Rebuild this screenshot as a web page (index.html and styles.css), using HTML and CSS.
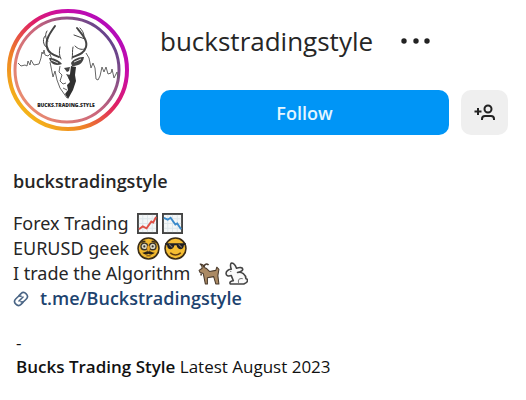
FILE: index.html
```html
<!DOCTYPE html>
<html lang="en">
<head>
  <meta charset="UTF-8">
  <meta name="viewport" content="width=device-width, initial-scale=1.0">
  <title>buckstradingstyle</title>
  <link rel="stylesheet" href="styles.css">
</head>
<body>
  <main class="profile">
    <header class="profile-header">
      <svg class="avatar" viewBox="0 0 124 124" role="img" aria-label="Bucks Trading Style logo">
        <defs>
          <linearGradient id="ring" x1="0.1" y1="0.9" x2="0.85" y2="0.15">
            <stop offset="0" stop-color="#f5bd16"/>
            <stop offset="0.3" stop-color="#ee8127"/>
            <stop offset="0.6" stop-color="#df2064"/>
            <stop offset="0.85" stop-color="#c80baa"/>
            <stop offset="1" stop-color="#b50bb8"/>
          </linearGradient>
          <linearGradient id="innerRing" x1="0.1" y1="0.8" x2="0.9" y2="0.2">
            <stop offset="0" stop-color="#e88a70"/>
            <stop offset="0.5" stop-color="#c9647c"/>
            <stop offset="1" stop-color="#67438c"/>
          </linearGradient>
        </defs>
        <circle cx="62" cy="62" r="59" fill="#fff" stroke="url(#ring)" stroke-width="4"/>
        <circle cx="61" cy="62" r="52" fill="#fff" stroke="url(#innerRing)" stroke-width="3"/>
        <!-- price line -->
        <g fill="none" stroke="#666" stroke-width="1" stroke-linejoin="round">
          <path d="M12 55l3 3 4-1 2 1 1-5 2 4 1-5 3 5 5-1 2-6 1-6 1 2 1-4 1 5 3 1 2-2 3 9"/>
          <path d="M80 45l3 5 2 10 2-5 2 5 1 11 2 1 2-4 2-9 2 5 2-5 2 7 3-1 1-4 2 9 3-6 1 7"/>
        </g>
        <!-- antlers -->
        <g fill="none" stroke="#444" stroke-linecap="round" stroke-linejoin="round">
          <path stroke-width="2" d="M53 49c-5-2-11-4-12-10-2-7 3-14 8-21M67 49c5-2 11-3 13-10 2-7-5-14-9-19"/>
          <path stroke-width="1" d="M42 33c-3-3-3-7-1-10M41 40c-5-4-4-10-2-12M55 51c-2-4-2-7-1-12M66 51c1-5 0-8 1-12M79 31l-11-4M79 41c-4 1-7 0-10-3M78 28c0-3-2-6-4-8"/>
        </g>
        <!-- ears and face -->
        <path fill="#444" d="M56 56c-4-5-9-6-13-6 2 7 7 8 13 6zM65 55c3-5 9-6 13-6-1 7-6 9-12 9z"/>
        <path fill="none" stroke="#ddd" stroke-width="1" d="M45 52l7 3M75 51l-7 3"/>
        <path fill="#303030" d="M65 58l5 1-1 8 1 6-3 9-5 9-3-5 3-4-1-5 3-3-2-5 2-3z"/>
        <path fill="#444" d="M58 60l6-1-1 4-2 1zM60 66l4 1-1 4z"/>
        <path fill="none" stroke="#666" stroke-width="1" d="M44 54l3 15 2-6 2 9 3 8 7 10M54 58l-1 6 3 3-2 6 3 3 3-1M57 80l4 2"/>
        <text class="avatar-text" x="60" y="99" text-anchor="middle">BUCKS.TRADING.STYLE</text>
      </svg>
      <div class="profile-info">
        <div class="title-row">
          <h1>buckstradingstyle</h1>
          <button type="button" class="btn-more" aria-label="More options">
            <svg width="30" height="6" viewBox="0 0 30 6" fill="#222">
              <circle cx="3" cy="3" r="2.7"/>
              <circle cx="15" cy="3" r="2.7"/>
              <circle cx="26" cy="3" r="2.7"/>
            </svg>
          </button>
        </div>
        <div class="action-row">
          <button type="button" class="btn btn-follow">Follow</button>
          <button type="button" class="btn btn-suggest" aria-label="Similar accounts">
            <svg width="24" height="20" viewBox="0 0 24 20" fill="none" stroke="#222" stroke-width="2">
              <circle cx="15" cy="6" r="3.5"/>
              <path d="M9 17v-1c0-2 1-3 3-3h6c2 0 3 1 3 3v1"/>
              <path d="M5 5v7M1.5 8.5h7"/>
            </svg>
          </button>
        </div>
      </div>
    </header>

    <section class="bio">
      <h2>buckstradingstyle</h2>
      <p>
        <span>Forex Trading</span>
        <svg class="emoji" viewBox="0 0 22 22" role="img" aria-label="Chart increasing">
          <rect x="1" y="1" width="20" height="20" fill="#f4f7f8" stroke="#444" stroke-width="2"/>
          <path d="M6 2v18M11 2v18M16 2v18M2 6h18M2 11h18M2 16h18" stroke="#dce6ea"/>
          <path d="M2 17l4-3 4 2 5-7 2 1 3-6" fill="none" stroke="#df5147" stroke-width="2"/>
        </svg>
        <svg class="emoji" viewBox="0 0 22 22" role="img" aria-label="Chart decreasing">
          <rect x="1" y="1" width="20" height="20" fill="#f4f7f8" stroke="#444" stroke-width="2"/>
          <path d="M6 2v18M11 2v18M16 2v18M2 6h18M2 11h18M2 16h18" stroke="#dce6ea"/>
          <path d="M2 5l4 2 3-2 5 7 2-1 4 6" fill="none" stroke="#3b8acb" stroke-width="2"/>
        </svg>
      </p>
      <p>
        <span>EURUSD geek</span>
        <svg class="emoji emoji-face" viewBox="0 0 22 22" role="img" aria-label="Disguised face">
          <circle cx="11" cy="11" r="10" fill="#f2b92f" stroke="#3a2d18" stroke-width="1.5"/>
          <path d="M4 5l4-1M14 4l4 1" stroke="#3a2d18" stroke-width="1.5"/>
          <circle cx="7" cy="9" r="3.2" fill="#d8d6c4" stroke="#3a3328" stroke-width="1.3"/>
          <circle cx="15" cy="9" r="3.2" fill="#d8d6c4" stroke="#3a3328" stroke-width="1.3"/>
          <circle cx="7" cy="9" r="1" fill="#3a3328"/>
          <circle cx="15" cy="9" r="1" fill="#3a3328"/>
          <ellipse cx="11" cy="11" rx="1.5" ry="3" fill="#efaa28" stroke="#8a5c1c" stroke-width="0.5"/>
          <path d="M5 15c3 0 4-2 6-1 2-1 3 1 6 1-2 2-5 2-6 1-1 1-4 1-6-1z" fill="#292116"/>
          <path d="M9 18h4" stroke="#6b4314"/>
        </svg>
        <svg class="emoji emoji-face" viewBox="0 0 22 22" role="img" aria-label="Face with sunglasses">
          <circle cx="11" cy="11" r="10" fill="#f5bd32" stroke="#3c2c15" stroke-width="1.5"/>
          <path d="M1 6h20v1l-2 1c0 5-6 5-7 0h-2c-1 5-7 5-7 0L1 7z" fill="#202024"/>
          <path d="M5 7l3 3M14 7l3 3" stroke="#84766a"/>
          <path d="M6 15c3 3 7 3 10 0" fill="none" stroke="#5d3b12" stroke-width="1.5"/>
        </svg>
      </p>
      <p>
        <span>I trade the Algorithm</span>
        <svg class="emoji emoji-face" viewBox="0 0 22 22" role="img" aria-label="Goat">
          <path d="M7 6C6 4 5 2 2 2c2 1 2 2 2 4L1 8l1 2 3 1 1 5 1 5h2v-6l6-1 2 7h3l-1-8 1-6-2-2-1 3-6 1-3-3z" fill="#ab8a64" stroke="#4a3b2d" stroke-linejoin="round"/>
          <path d="M5 5c1-3 4-4 5-2M3 11v2" fill="none" stroke="#4a3b2d" stroke-width="1.5"/>
        </svg>
        <svg class="emoji emoji-face" viewBox="0 0 22 22" role="img" aria-label="Rabbit">
          <path d="M6 7C5 4 5 2 6 1c3 0 4 2 5 5 3-1 6-1 6 1s-2 2-5 3c4-1 8 2 8 6 2 0 2 3 0 4l-2 1H5c-1-2 1-3 3-3l-2-5c-3 1-5 0-5-2s2-4 5-4z" fill="#fafafa" stroke="#444" stroke-width="1.5" stroke-linejoin="round"/>
          <path d="M5 9h1M13 20c-1-3 1-5 4-4" fill="none" stroke="#777"/>
        </svg>
      </p>
      <a class="bio-link" href="https://t.me/Buckstradingstyle">
        <svg width="16" height="16" viewBox="0 0 24 24" fill="none" stroke="#4a6585" stroke-width="2.4" stroke-linecap="round">
          <path d="M9 7l3-3c5-5 13 3 8 8l-3 3c-1 1-3 2-5 1"/>
          <path d="M15 17l-3 3c-5 5-13-3-8-8l3-3c1-1 3-2 5-1"/>
          <path d="M9 15l6-6"/>
        </svg>
        <span>t.me/Buckstradingstyle</span>
      </a>
    </section>

    <footer class="caption">
      <p>-</p>
      <p><strong>Bucks Trading Style</strong> Latest August 2023</p>
    </footer>
  </main>
</body>
</html>
```
FILE: styles.css
```css
body {
  font-family: "Open Sans", "Noto Sans", sans-serif;
  background-color: #fff;
  color: #262626;
  margin: 0;
}

h1,
h2,
p {
  margin: 0;
}

.profile {
  padding: 8px 18px 8px 6px;
}

.profile-header {
  display: flex;
  gap: 30px;
}

.avatar {
  width: 124px;
  height: 124px;
  flex: none;
}

.avatar-text {
  font-size: 5px;
  font-weight: 800;
  fill: #222;
}

.profile-info {
  flex: 1;
  padding-top: 12px;
}

.title-row {
  display: flex;
  align-items: center;
  gap: 28px;
}

h1 {
  font-size: 26px;
  font-weight: 400;
  line-height: 42px;
}

.btn-more {
  display: flex;
  padding: 0;
  border: none;
  background: none;
  cursor: pointer;
}

.action-row {
  display: flex;
  gap: 12px;
  margin-top: 28px;
}

.btn {
  height: 45px;
  padding: 0;
  border: none;
  border-radius: 10px;
  cursor: pointer;
}

.btn-follow {
  flex: 1;
  background-color: #0095f6;
  color: #e4f6ff;
  font-family: inherit;
  font-size: 18px;
  font-weight: 600;
}

.btn-suggest {
  display: flex;
  align-items: center;
  justify-content: center;
  width: 47px;
  background-color: #efefef;
}

.bio {
  padding: 33px 7px 0;
  font-size: 18px;
  line-height: 25px;
}

h2 {
  margin-bottom: 17px;
  font-size: 18px;
  font-weight: 600;
  line-height: 26px;
}

.bio p {
  display: flex;
  align-items: center;
  gap: 4px;
  font-family: "Noto Sans", sans-serif;
}

.bio p span {
  margin-right: 4px;
}

.emoji {
  width: 21px;
  height: 21px;
}

.emoji-face {
  width: 23px;
  height: 23px;
}

.bio-link {
  display: inline-flex;
  align-items: center;
  gap: 11px;
  color: #1d436f;
  font-weight: 600;
  text-decoration: none;
}

.caption {
  padding: 18px 10px 0;
  color: #111;
  font-size: 17px;
  line-height: 24px;
}

.caption strong {
  font-weight: 600;
}
```
